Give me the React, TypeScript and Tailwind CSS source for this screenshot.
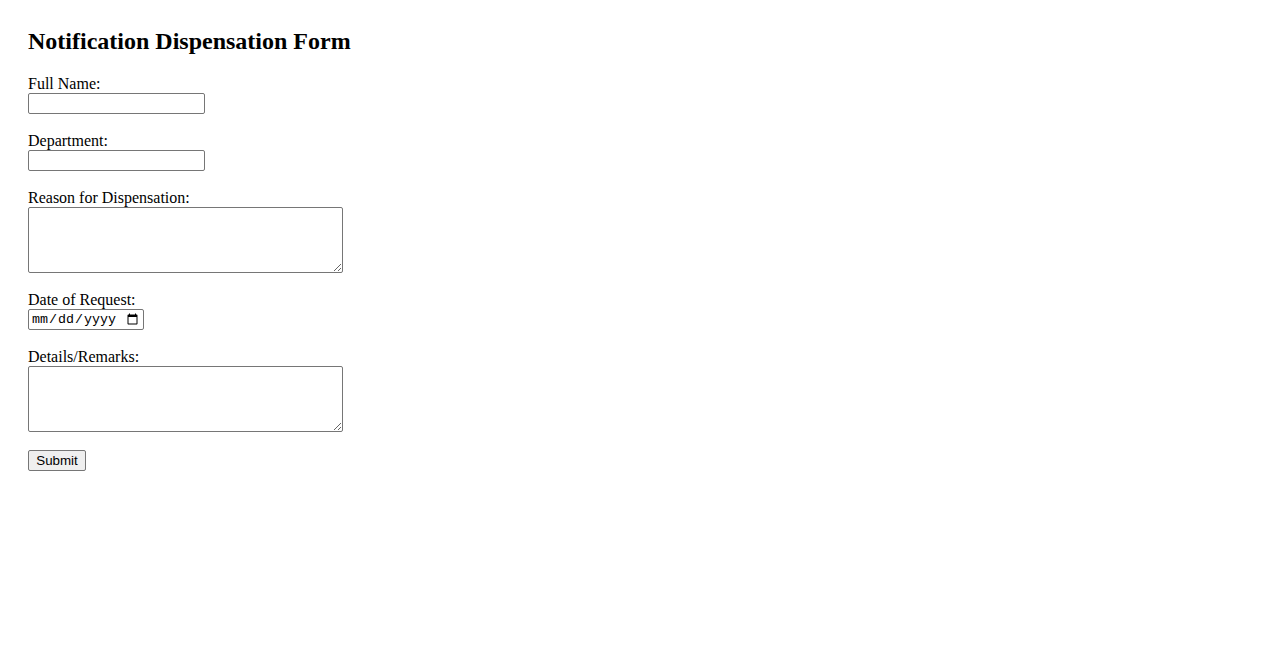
import React from 'react';

const labelCls = "block text-[16px] leading-[17px] pb-[1px] text-black";
const inputCls =
  "block w-[177px] h-[21px] border border-[#767676] rounded-[2px] px-[2px] py-[1px] bg-white text-[13.33px] font-['Liberation_Sans',sans-serif] outline-none";
const areaCls =
  "block w-[315px] h-[66px] border border-[#767676] rounded-[2px] px-[2px] py-[2px] bg-white text-[13.33px] font-['Liberation_Mono',monospace]";

export default function App() {
  return (
    <div className="min-h-[650px] bg-white pl-[28px] pt-[28px] font-['Liberation_Serif',serif] text-black">
      <h2 className="text-[24px] leading-[26px] font-bold mb-[21px]">Notification Dispensation Form</h2>

      <form className="flex flex-col" onSubmit={(e) => e.preventDefault()}>
        {/* Full name */}
        <label htmlFor="fullName" className={labelCls}>Full Name:</label>
        <input id="fullName" type="text" className={inputCls} />

        {/* Department */}
        <label htmlFor="department" className={`${labelCls} mt-[18px]`}>Department:</label>
        <input id="department" type="text" className={inputCls} />

        {/* Reason */}
        <label htmlFor="reason" className={`${labelCls} mt-[18px]`}>Reason for Dispensation:</label>
        <textarea id="reason" className={areaCls} />

        {/* Date */}
        <label htmlFor="date" className={`${labelCls} mt-[18px]`}>Date of Request:</label>
        <input
          id="date"
          type="date"
          className="block w-[116px] h-[21px] border border-[#767676] rounded-[2px] pl-[2px] pr-[2px] bg-white text-[13.33px] font-['Liberation_Mono',monospace]"
        />

        {/* Details */}
        <label htmlFor="details" className={`${labelCls} mt-[18px]`}>Details/Remarks:</label>
        <textarea id="details" className={areaCls} />

        <button
          type="submit"
          className="block self-start mt-[18px] w-[58px] h-[21px] border border-[#767676] rounded-[2px] bg-[#efefef] text-[13.33px] leading-[15px] font-['Liberation_Sans',sans-serif] text-black"
        >
          Submit
        </button>
      </form>
    </div>
  );
}
